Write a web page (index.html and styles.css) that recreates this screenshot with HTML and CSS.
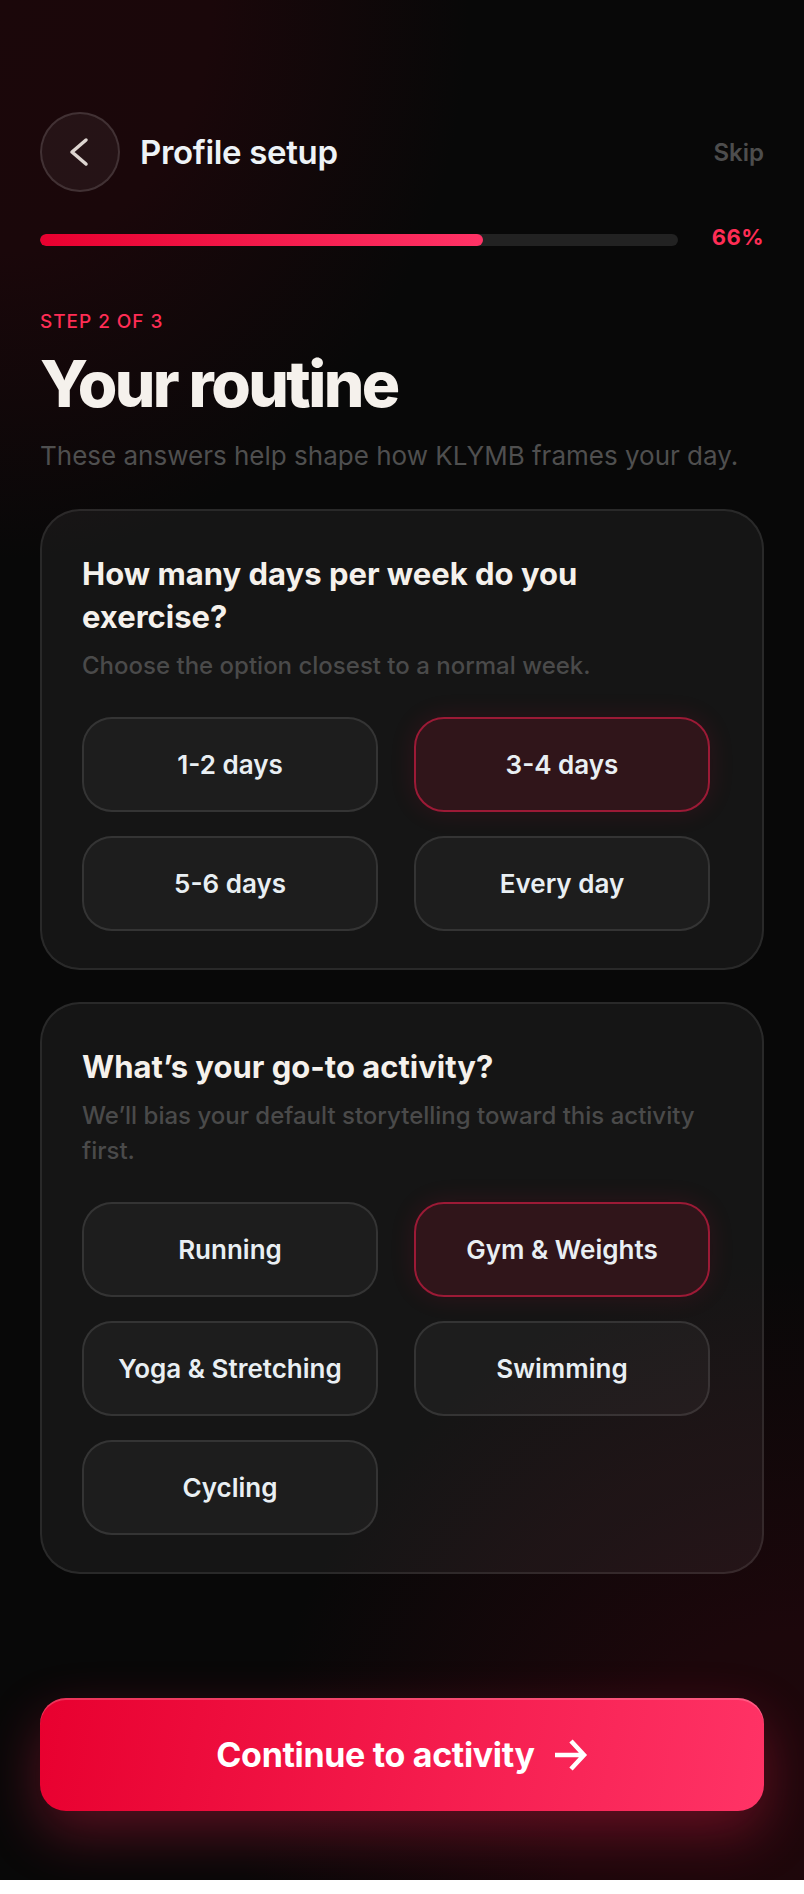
FILE: index.html
```html
<!DOCTYPE html>
<html lang="en">
<head>
    <meta charset="UTF-8">
    <meta name="viewport" content="width=device-width, initial-scale=1.0">
    <title>Profile setup</title>
    <link rel="stylesheet" href="styles.css">
</head>
<body>
    <div class="screen">
        <div class="topbar">
            <button class="back-btn" aria-label="Back">
                <svg viewBox="0 0 20 30" width="20" height="30">
                    <path d="M17 3 L3 15 L17 27" fill="none" stroke="#ddd5d0" stroke-width="3.5" stroke-linecap="round" stroke-linejoin="round"/>
                </svg>
            </button>
            <h1 class="topbar-title">Profile setup</h1>
            <a class="skip" href="#">Skip</a>
        </div>

        <div class="progress">
            <div class="progress-track">
                <div class="progress-fill" style="width: 69.5%"></div>
            </div>
            <span class="progress-value">66%</span>
        </div>

        <p class="step">STEP 2 OF 3</p>
        <h2 class="page-title">Your routine</h2>
        <p class="page-sub">These answers help shape how KLYMB frames your day.</p>

        <section class="card">
            <h3 class="card-title">How many days per week do you exercise?</h3>
            <p class="card-sub">Choose the option closest to a normal week.</p>
            <div class="options">
                <button class="option">1-2 days</button>
                <button class="option selected">3-4 days</button>
                <button class="option">5-6 days</button>
                <button class="option">Every day</button>
            </div>
        </section>

        <section class="card">
            <h3 class="card-title">What’s your go-to activity?</h3>
            <p class="card-sub">We’ll bias your default storytelling toward this activity first.</p>
            <div class="options">
                <button class="option">Running</button>
                <button class="option selected">Gym &amp; Weights</button>
                <button class="option">Yoga &amp; Stretching</button>
                <button class="option">Swimming</button>
                <button class="option">Cycling</button>
            </div>
        </section>

        <button class="continue-btn">
            Continue to activity
            <svg viewBox="0 0 36 36" width="36" height="36">
                <path d="M3 18 H31 M19 4 L32 18 L19 32" fill="none" stroke="#fff" stroke-width="4.5" stroke-linejoin="miter"/>
            </svg>
        </button>
    </div>
</body>
</html>
```

FILE: styles.css
```css
* {
    margin: 0;
    padding: 0;
    box-sizing: border-box;
    font-family: 'Inter', 'Noto Sans', sans-serif;
}

html {
    background: #fff;
}

body {
    margin: 0;
}

.screen {
    min-height: 1880px;
    padding: 112px 40px 69px;
    display: flex;
    flex-direction: column;
    background:
        radial-gradient(ellipse 470px 560px at 0% 0%, #1b070a 0%, #1a070a 45%, rgba(8, 8, 8, 0) 100%),
        radial-gradient(ellipse 560px 620px at 100% 100%, #1e070b 0%, #1c070b 40%, rgba(8, 8, 8, 0) 100%),
        #080808;
}

/* Header */
.topbar {
    display: flex;
    align-items: center;
    height: 80px;
}

.back-btn {
    width: 80px;
    height: 80px;
    border-radius: 50%;
    border: 2px solid rgba(255, 255, 255, 0.13);
    background: rgba(255, 255, 255, 0.05);
    display: flex;
    align-items: center;
    justify-content: center;
    margin-right: 20px;
    cursor: pointer;
}

.back-btn svg {
    margin-left: -2px;
}

.topbar-title {
    font-size: 33px;
    font-weight: 600;
    color: #eef3f7;
    letter-spacing: -0.01em;
}

.skip {
    margin-left: auto;
    font-size: 24px;
    font-weight: 600;
    color: #4d4d4d;
    text-decoration: none;
}

/* Progress */
.progress {
    display: flex;
    align-items: center;
    gap: 34px;
    margin-top: 34px;
    height: 27px;
}

.progress-track {
    flex: 1;
    height: 12px;
    border-radius: 6px;
    background: #222;
    overflow: hidden;
}

.progress-fill {
    height: 100%;
    border-radius: 6px;
    background: linear-gradient(90deg, #e8002f, #ff3366);
}

.progress-value {
    margin-bottom: 6px;
    font-size: 22px;
    font-weight: 700;
    color: #ff2d55;
    letter-spacing: 0.02em;
}

/* Intro */
.step {
    margin-top: 57px;
    font-size: 19px;
    font-weight: 500;
    letter-spacing: 0.05em;
    color: #ff2d55;
}

.page-title {
    margin-top: 16px;
    font-size: 64px;
    line-height: 1.1;
    font-weight: 800;
    letter-spacing: -0.04em;
    color: #f5f1ec;
}

.page-sub {
    margin-top: 17px;
    font-size: 26px;
    line-height: 1.5;
    color: #4f4f4f;
}

/* Question cards */
.card {
    margin-top: 34px;
    padding: 41px 52px 37px 40px;
    border: 2px solid rgba(255, 255, 255, 0.09);
    border-radius: 40px;
    background: rgba(255, 255, 255, 0.055);
}

.card + .card {
    margin-top: 32px;
}

.card-title {
    font-size: 31px;
    line-height: 43px;
    font-weight: 700;
    color: #f5f1ec;
}

.card-sub {
    margin-top: 10px;
    font-size: 24px;
    line-height: 35px;
    font-weight: 500;
    color: #4a4a4a;
}

.options {
    margin-top: 34px;
    display: grid;
    grid-template-columns: 1fr 1fr;
    column-gap: 36px;
    row-gap: 24px;
}

.option {
    height: 95px;
    border-radius: 30px;
    border: 2px solid rgba(255, 255, 255, 0.1);
    background: rgba(255, 255, 255, 0.035);
    font-size: 26px;
    font-weight: 600;
    color: #e9eff3;
    cursor: pointer;
}

.option.selected {
    border-color: #9c1a36;
    background: rgba(120, 20, 40, 0.28);
    box-shadow: 0 0 26px rgba(230, 20, 60, 0.12);
}

/* Footer action */
.continue-btn {
    margin-top: auto;
    height: 113px;
    border: none;
    border-radius: 26px;
    background: linear-gradient(100deg, #e8002f, #ff3366);
    box-shadow: inset 0 2px 0 rgba(255, 255, 255, 0.2), 0 22px 56px rgba(255, 30, 80, 0.32);
    display: flex;
    align-items: center;
    justify-content: center;
    gap: 17px;
    font-size: 34px;
    font-weight: 700;
    letter-spacing: -0.01em;
    color: #fff;
    cursor: pointer;
}
```
